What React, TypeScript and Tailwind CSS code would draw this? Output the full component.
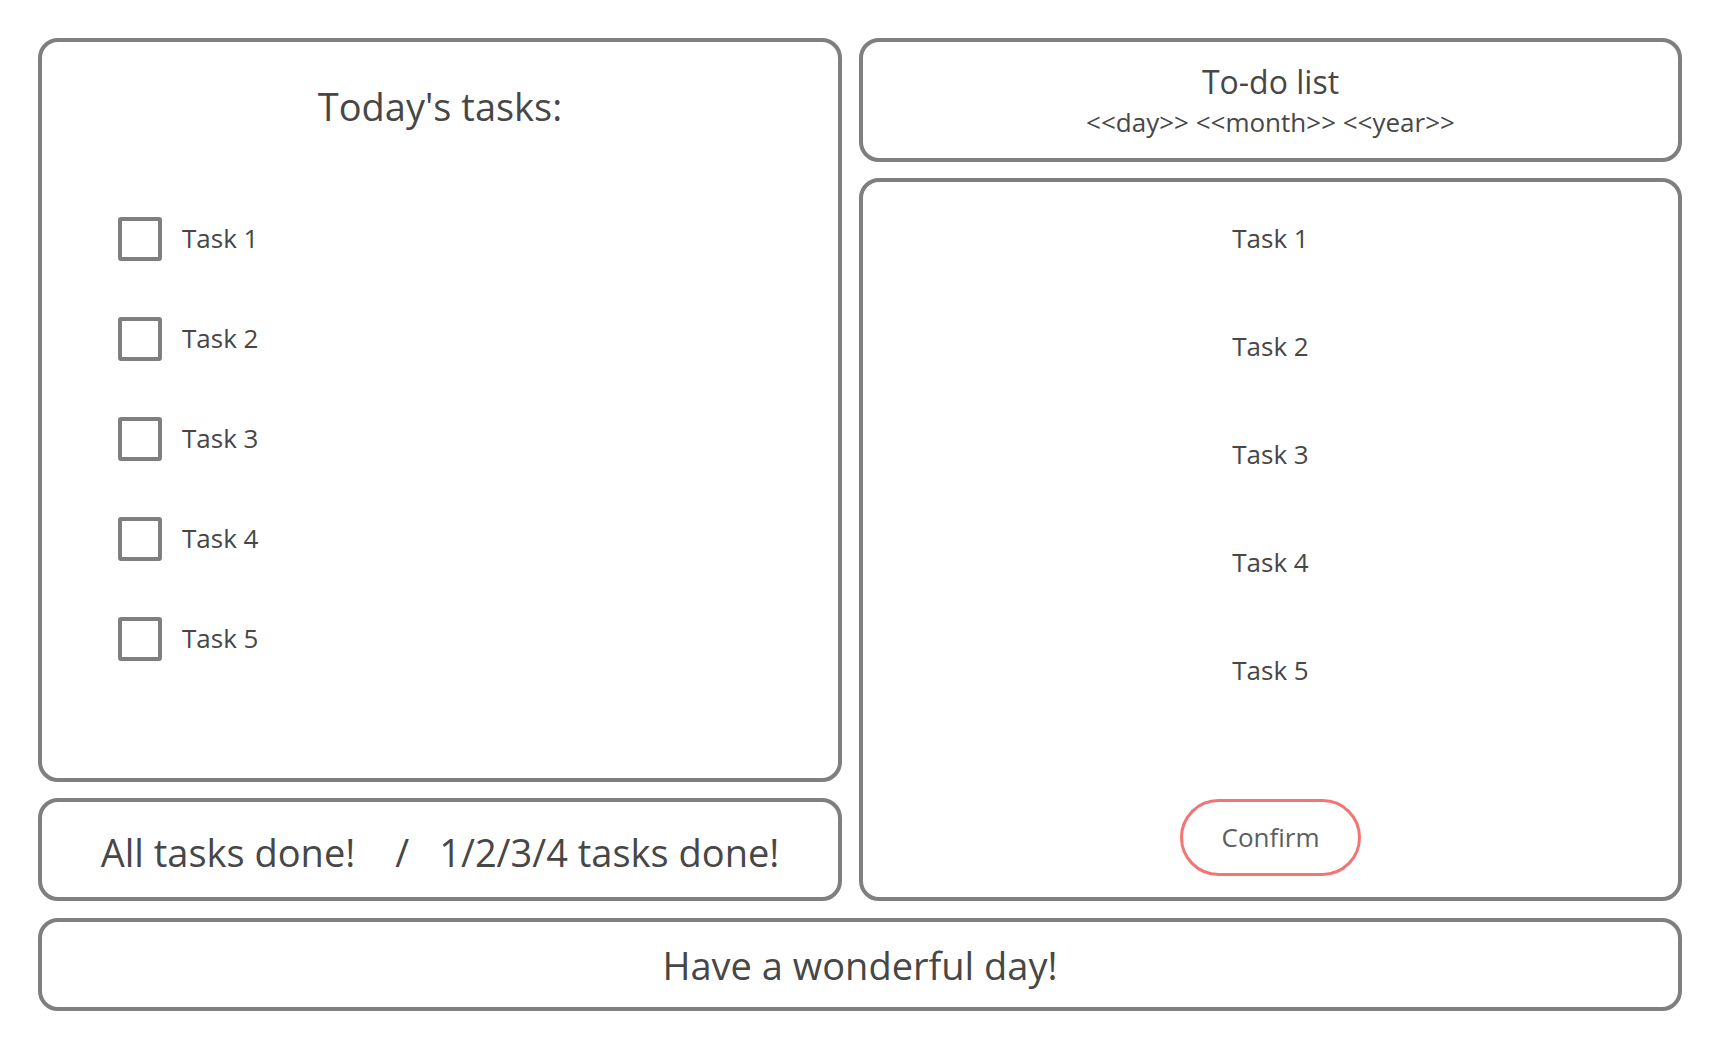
import React from "react";

const tasks = ["Task 1", "Task 2", "Task 3", "Task 4", "Task 5"];

export default function App() {
  return (
    <div
      className="w-[1720px] h-[1050px] bg-white pl-[38px] pt-[38px] flex flex-col gap-[17px] text-[#474747]"
      style={{ fontFamily: '"Open Sans", "Noto Sans", sans-serif' }}
    >
      <div className="flex gap-[17px] w-[1644px] h-[863px]">
        {/* Left column */}
        <div className="flex flex-col gap-4 w-[804px]">
          <div className="h-[744px] border-4 border-[#7f7f7f] rounded-[20px] pt-[39px]">
            <h1 className="text-center text-[38px] leading-[50px]">Today's tasks:</h1>
            <ul className="mt-[86px] pl-[76px] flex flex-col gap-[56px]">
              {tasks.map((t) => (
                <li key={t} className="flex items-center gap-5 h-[44px]">
                  <span className="w-[44px] h-[44px] border-4 border-[#7f7f7f] rounded-[3px] shrink-0" />
                  <span className="text-[26px] leading-[36px] -mt-[2px]">{t}</span>
                </li>
              ))}
            </ul>
          </div>
          <div className="h-[103px] border-4 border-[#7f7f7f] rounded-[20px] flex items-center justify-center pt-[4px]">
            <p className="text-[38px] leading-[50px] flex items-center">
              <span>All tasks done!</span>
              <span className="ml-[40px] mr-[30px]">/</span>
              <span>1/2/3/4 tasks done!</span>
            </p>
          </div>
        </div>
        {/* Right column */}
        <div className="flex flex-col gap-4 flex-1">
          <div className="h-[124px] border-4 border-[#7f7f7f] rounded-[20px] flex flex-col items-center justify-center gap-[3px]">
            <h2 className="text-[32px] leading-[40px]">To-do list</h2>
            <p className="text-[26px] leading-[34px]">&lt;&lt;day&gt;&gt; &lt;&lt;month&gt;&gt; &lt;&lt;year&gt;&gt;</p>
          </div>
          <div className="flex-1 border-4 border-[#7f7f7f] rounded-[20px] pt-[38px] pb-[21px] flex flex-col items-center">
            <ul className="flex flex-col items-center gap-[72px]">
              {tasks.map((t) => (
                <li key={t} className="text-[26px] leading-[36px]">{t}</li>
              ))}
            </ul>
            <button className="mt-auto w-[181px] h-[77px] border-[3px] border-[#f47373] rounded-full text-[26px] text-[#5e5e5e] bg-white">
              Confirm
            </button>
          </div>
        </div>
      </div>
      <div className="w-[1644px] h-[93px] border-4 border-[#7f7f7f] rounded-[20px] flex items-center justify-center">
        <p className="text-[38px] leading-[50px]">Have a wonderful day!</p>
      </div>
    </div>
  );
}
